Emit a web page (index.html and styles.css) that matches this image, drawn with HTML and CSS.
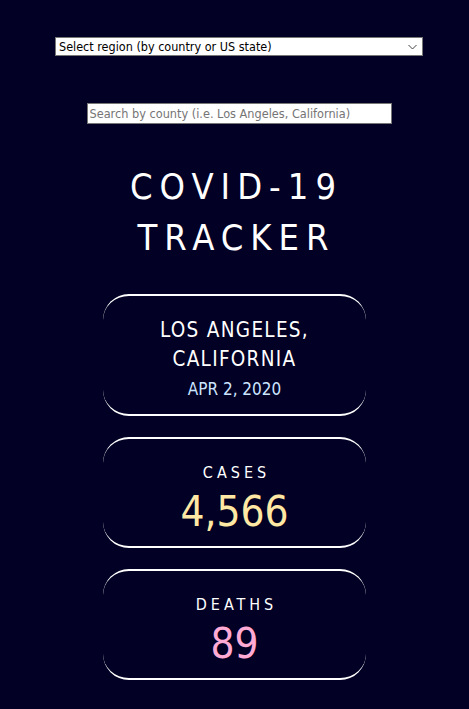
FILE: index.html
```html
<!DOCTYPE html>
<html>
<head>
<meta charset="utf-8">
<link rel="stylesheet" href="styles.css">
</head>
<body>
<main class="page">
  <div class="select-wrap">
    <select class="region">
      <option>Select region (by country or US state)</option>
    </select>
    <svg class="chevron" width="9" height="6" viewBox="0 0 9 6"><path d="M0.5 1 L4.5 5 L8.5 1" fill="none" stroke="#444" stroke-width="1"/></svg>
  </div>
  <input class="search" type="text" placeholder="Search by county (i.e. Los Angeles, California)">
  <h1 class="title">COVID-19<br>TRACKER</h1>
  <section class="card place">
    <div class="place-name">LOS ANGELES,<br>CALIFORNIA</div>
    <div class="date">APR 2, 2020</div>
  </section>
  <section class="card stat">
    <div class="label">CASES</div>
    <div class="value cases">4,566</div>
  </section>
  <section class="card stat">
    <div class="label">DEATHS</div>
    <div class="value deaths">89</div>
  </section>
</main>
</body>
</html>
```
FILE: styles.css
```css
html, body {
  margin: 0;
  padding: 0;
  background: #020024;
  height: 100%;
}
.page {
  display: flex;
  flex-direction: column;
  align-items: center;
  padding-top: 37px;
  font-family: "DejaVu Sans Condensed", "DejaVu Sans", sans-serif;
  color: #fff;
}
.select-wrap {
  position: relative;
  margin-left: 9px;
  width: 368px;
  height: 19px;
}
.region {
  appearance: none;
  -webkit-appearance: none;
  width: 368px;
  height: 19px;
  font-family: "DejaVu Sans Condensed", sans-serif;
  font-size: 12.5px;
  background: #fff;
  color: #000;
  border: 1px solid #767676;
  border-radius: 0;
  padding: 0 3px;
  margin: 0;
  display: block;
}
.chevron {
  position: absolute;
  right: 6px;
  top: 7px;
  pointer-events: none;
}
.search {
  margin-top: 47px;
  margin-left: 9px;
  width: 305px;
  height: 21px;
  box-sizing: border-box;
  font-family: "DejaVu Sans Condensed", sans-serif;
  font-size: 12.6px;
  border: 1px solid #767676;
  padding: 0 2px;
  background: #fff;
}
.search::placeholder { color: #757575; }
.title {
  margin: 37px 0 0;
  font-weight: normal;
  font-size: 36px;
  line-height: 51px;
  letter-spacing: 7px;
  text-align: center;
  padding-left: 4px;
}
.card {
  width: 263px;
  box-sizing: border-box;
  border-top: 2px solid #fff;
  border-bottom: 2px solid #fff;
  border-radius: 26px;
  text-align: center;
}
.place {
  margin-top: 31px;
  height: 122px;
  padding-top: 20px;
}
.place-name {
  font-size: 20.5px;
  line-height: 29px;
  letter-spacing: 1.3px;
}
.date {
  font-size: 17px;
  line-height: 31px;
  color: #cce5ff;
}
.stat {
  margin-top: 21px;
  height: 111px;
  padding-top: 24px;
}
.label {
  font-size: 16px;
  line-height: 20px;
  letter-spacing: 4px;
  padding-left: 4px;
}
.value {
  font-size: 42px;
  line-height: 58px;
}
.cases { color: #ffe8a3; }
.deaths { color: #ffaad4; }
```
